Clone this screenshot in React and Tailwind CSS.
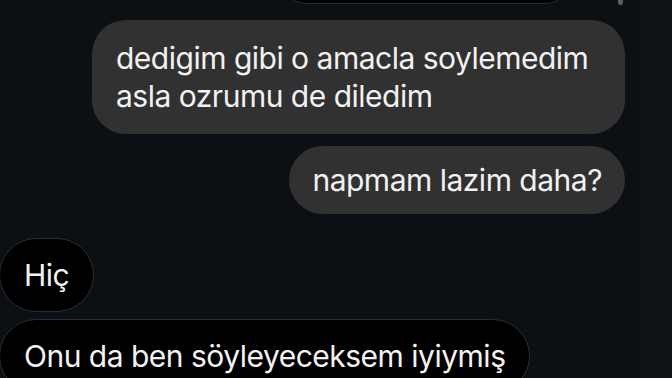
import React from "react";

const Mine = ({ children, className = "" }) => (
  <div
    className={
      "shrink-0 self-end mr-4 bg-[#313131] text-[#f2f2f2] rounded-[34px] " + className
    }
  >
    {children}
  </div>
);

const Theirs = ({ children, className = "" }) => (
  <div
    className={
      "shrink-0 self-start -ml-[1px] bg-black text-[#f2f2f2] border border-[#2a2d31] rounded-[38px] " +
      className
    }
  >
    {children}
  </div>
);

export default function App() {
  return (
    <div
      className="relative w-[672px] h-[378px] overflow-hidden bg-[#0c1014] flex"
      style={{ fontFamily: "Inter, 'Noto Sans', sans-serif" }}
    >
      {/* messages */}
      <div className="flex-1 flex flex-col text-[30px] leading-[38px] tracking-[-0.5px]">
        <div className="shrink-0 self-end mr-[66px] -mt-[56px] w-[297px] h-[60px] bg-black border border-[#2a2d31] rounded-[30px]" />

        <Mine className="mt-4 pl-6 pr-[24px] py-[19px] rounded-[30px] w-[533px]">
          dedigim gibi o amacla soylemedim
          <br />
          asla ozrumu de diledim
        </Mine>

        <Mine className="mt-3 px-[23px] py-[15px]">napmam lazim daha?</Mine>

        <Theirs className="mt-6 px-[24px] py-[17px]">Hiç</Theirs>

        <Theirs className="mt-[7px] px-[24px] py-[17px]">
          Onu da ben söyleyeceksem iyiymiş
        </Theirs>
      </div>

      {/* right strip */}
      <div className="w-[31px] bg-[#0e1216]" />

      {/* scroll indicator */}
      <div className="absolute left-[618px] top-[-4px] w-[5px] h-[9px] rounded-full bg-[#5b5f63]" />
    </div>
  );
}
